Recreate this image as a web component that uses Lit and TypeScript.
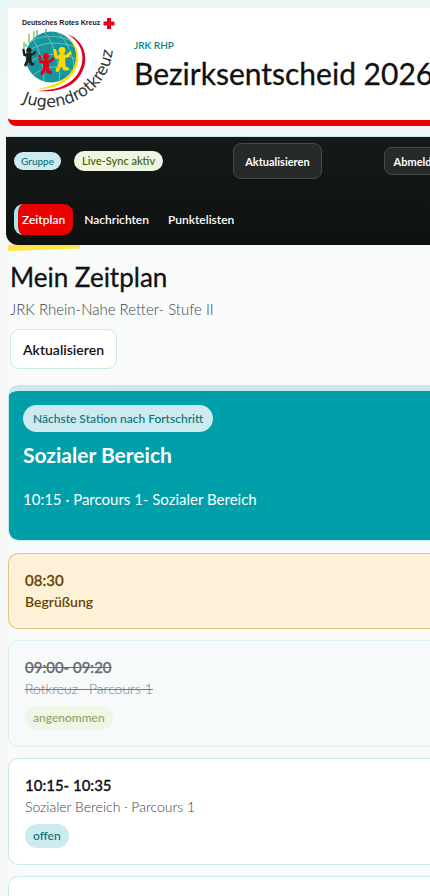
import { LitElement, html, css, svg } from "lit";
import { customElement, property } from "lit/decorators.js";
import { classMap } from "lit/directives/class-map.js";

interface Slot {
  time: string;
  title: string;
  kind: "notice" | "done" | "open";
  badge?: string;
}

const SLOTS: Slot[] = [
  { time: "08:30", title: "Begrüßung", kind: "notice" },
  { time: "09:00- 09:20", title: "Rotkreuz · Parcours 1", kind: "done", badge: "angenommen" },
  { time: "10:15- 10:35", title: "Sozialer Bereich · Parcours 1", kind: "open", badge: "offen" },
];

@customElement("jrk-logo")
class JrkLogo extends LitElement {
  static styles = css`
    :host { display: block; flex: none; width: 96px; height: 96px; }
    svg { display: block; width: 100%; height: 100%; }
    .org { font: 700 7px "Liberation Sans", Arial, sans-serif; fill: #222; }
    .name { font: 400 16px "DejaVu Sans", Arial, sans-serif; fill: #333; }
  `;

  private person(color: string) {
    return svg`<g fill="none" stroke=${color} stroke-linecap="round" stroke-linejoin="round">
      <circle cx="0" cy="-5" r="2.6" fill=${color} stroke="none"/>
      <path d="M-5.5 -5 L-4.5 0 L0 0 L4.5 -1 L6 -3" stroke-width="2.4"/>
      <path d="M0 0 V5" stroke-width="5"/>
      <path d="M-1 5 L-3.5 10 M1 5 L2 9 L4 9" stroke-width="2.8"/>
    </g>`;
  }

  render() {
    return html`<svg viewBox="20 16 96 96" role="img" aria-label="Deutsches Rotes Kreuz Jugendrotkreuz">
      <defs>
        <clipPath id="globe"><circle cx="51" cy="57" r="25.5" /></clipPath>
        <path id="arc" d="M22 102 C46 112 76 107 96 87 C109 74 115 56 113 30" />
      </defs>
      <text class="org" x="22" y="25">Deutsches Rotes Kreuz</text>
      <path d="M107 18h4v3.500h3.500v4h-3.500v3.500h-4v-3.500h-3.500v-4h3.500z" fill="#e3001b" />
      <circle cx="51" cy="57" r="25.500" fill="#14979f" />
      <g clip-path="url(#globe)" fill="none" stroke="#6fbdb4" stroke-width="1">
        <path d="M25 53Q48 36 78 48M24 66Q48 46 79 60M30 78Q50 58 78 74M31 36Q45 56 44 84M44 31Q60 52 60 84M56 31Q76 48 74 76M28 43Q44 31 70 40" />
      </g>
      <path d="M29 43V34M34 38V31M24 50V42" stroke="#9bc84a" stroke-width="1.500" />
      <path d="M37 36V30M46 32V29M26 47V44" stroke="#55b8be" stroke-width="1.500" />
      <path d="M65 35C82 45 83 68 67 80C58 87 48 89 38 89C53 86 67 80 73 69C79 57 77 44 65 35Z" fill="#ffe000" />
      <path d="M67 34C90 42 91 70 72 84C61 91 49 92 37 91C54 90 68 87 77 75C87 60 83 43 67 34Z" fill="#e3001b" />
      <g transform="translate(29 55)">${this.person("#20211f")}</g>
      <g transform="translate(46 62) scale(1.150)">${this.person("#e3001b")}</g>
      <g transform="translate(62 57) scale(1.300)">${this.person("#ffd900")}</g>
      <text class="name"><textPath href="#arc">Jugendrotkreuz</textPath></text>
    </svg>`;
  }
}

@customElement("schedule-card")
class ScheduleCard extends LitElement {
  @property({ attribute: false }) slotData!: Slot;

  static styles = css`
    :host { display: block; }
    .card {
      box-sizing: border-box;
      padding: 15px 16px 16px;
      border: 1px solid #cbe8eb;
      border-right: 0;
      border-radius: 10px 0 0 10px;
      background: #fff;
      color: #111;
    }
    .notice { background: #fff1d8; border-color: #e0c382; color: #684300; }
    .done { background: #f6fafb; border-color: #dcf0f1; color: #686c6c; }
    .time { margin: 0; font-size: 15px; line-height: 22px; font-weight: 500; -webkit-text-stroke: 0.3px; }
    .title { margin: 0; font-size: 14px; line-height: 22px; font-weight: 300; color: #3d4343; }
    .notice .title { font-weight: 600; color: inherit; }
    .notice { padding-bottom: 15px; }
    .done .title { color: #777c7c; }
    .done .time, .done .title { text-decoration: line-through; }
    .badge {
      display: inline-block;
      margin: 6px 0 0;
      padding: 0 8px;
      border-radius: 12px;
      font-size: 12px;
      line-height: 24px;
      font-weight: 500;
      background: #cdeaf0;
      color: #087279;
    }
    .done .badge { background: #f1f5e6; color: #8ea462; }
    .foot { display: flex; }
  `;

  render() {
    const s = this.slotData;
    return html`<article class=${classMap({ card: true, [s.kind]: true })}>
      <p class="time">${s.time}</p>
      <p class="title">${s.title}</p>
      ${s.badge ? html`<div class="foot"><span class="badge">${s.badge}</span></div>` : ""}
    </article>`;
  }
}

@customElement("app-root")
class AppRoot extends LitElement {
  static styles = css`
    :host {
      display: block;
      height: 100vh;
      overflow: hidden;
      box-sizing: border-box;
      padding: 8px 0 0 8px;
      font-family: Lato, "Open Sans", sans-serif;
      color: #111;
      background: linear-gradient(#e9f6f6, #f8f8f8 240px);
    }
    h1, h2, h3, p { margin: 0; }
    button { font: inherit; cursor: pointer; white-space: nowrap; }
    header {
      display: flex;
      align-items: center;
      gap: 18px;
      height: 112px;
      padding-left: 12px;
      background: #fff;
      border-bottom: 6px solid #eb0000;
      border-radius: 0 0 0 8px;
      white-space: nowrap;
    }
    .heading { padding-top: 4px; }
    .eyebrow { font-size: 10px; line-height: 14px; font-weight: 600; color: #087f86; }
    h1 { font-size: 30px; line-height: 42px; font-weight: 400; -webkit-text-stroke: 0.3px; }
    .bar {
      margin: 10px 0 0 -2px;
      padding: 0 0 10px 8px;
      border-top: 1px solid #cfe8ec;
      border-radius: 0 0 0 12px;
      background: linear-gradient(#151918, #0d110f);
      color: #fff;
    }
    .status { display: flex; align-items: center; height: 48px; white-space: nowrap; }
    .pill { border-radius: 14px; background: #cdeaf0; color: #087279; font-weight: 500; }
    .group { padding: 0 7px; font-size: 10px; line-height: 18px; }
    .live { margin-left: 13px; padding: 0 8px; font-size: 11px; line-height: 20px; background: #eff5df; color: #3e5b00; }
    .dark {
      box-sizing: border-box;
      border: 1px solid #464a49;
      background: #262a29;
      color: #fff;
      font-size: 11px;
      font-weight: 700;
    }
    .refresh { height: 36px; margin-left: 70px; padding: 0 11px; border-radius: 8px; }
    .logout { height: 28px; margin-left: 62px; padding: 0 9px; border-radius: 8px; }
    nav { display: flex; gap: 19px; margin-top: 19px; }
    nav a { font-size: 12px; line-height: 31px; font-weight: 600; color: #fff; text-decoration: none; }
    nav a.active { margin-right: -8px; padding: 0 8px 0 4px; border-left: 4px solid #9feaf0; border-radius: 9px; background: #eb0000; }
    .accent { width: 72px; height: 6px; background: #ffe443; clip-path: polygon(0 0, 100% 0, 100% 60%, 0 100%); }
    main { background: #f8fbfa; }
    .intro { padding: 8px 0 16px 2px; }
    h2 { font-size: 26px; line-height: 36px; font-weight: 400; -webkit-text-stroke: 0.3px; }
    .team { font-size: 15px; line-height: 20px; margin-top: 4px; font-weight: 300; color: #3f4646; }
    .light {
      height: 40px;
      margin-top: 10px;
      padding: 0 12px;
      border: 1px solid #cbe8eb;
      border-radius: 9px;
      background: #fff;
      color: #111;
      font-size: 14px;
      font-weight: 600;
    }
    .next {
      box-sizing: border-box;
      height: 156px;
      padding: 14px;
      border: 1px solid #cbe8eb;
      border-top: 6px solid #cde7ea;
      border-right: 0;
      border-radius: 10px 0 0 10px;
      background: #00a0ab;
      background-clip: padding-box;
      color: #fff;
    }
    .hint { display: inline-block; padding: 0 10px; font-size: 12px; line-height: 27px; }
    h3 { margin-top: 9px; font-size: 21px; line-height: 28px; font-weight: 700; }
    .where { margin-top: 20px; font-size: 15px; line-height: 20px; }
    .list { display: grid; gap: 11px; margin-top: 12px; }
    .upcoming { height: 40px; border: 1px solid #cbe8eb; border-right: 0; border-radius: 10px 0 0 10px; background: #fff; }
  `;

  render() {
    return html`
      <header>
        <jrk-logo></jrk-logo>
        <div class="heading">
          <p class="eyebrow">JRK RHP</p>
          <h1>Bezirksentscheid 2026</h1>
        </div>
      </header>
      <div class="bar">
        <div class="status">
          <span class="pill group">Gruppe</span>
          <span class="pill live">Live-Sync aktiv</span>
          <button class="dark refresh">Aktualisieren</button>
          <button class="dark logout">Abmelden</button>
        </div>
        <nav>
          <a class="active" href="#zeitplan">Zeitplan</a>
          <a href="#nachrichten">Nachrichten</a>
          <a href="#punktelisten">Punktelisten</a>
        </nav>
      </div>
      <main>
        <div class="accent"></div>
        <section class="intro">
          <h2>Mein Zeitplan</h2>
          <p class="team">JRK Rhein-Nahe Retter- Stufe II</p>
          <button class="light">Aktualisieren</button>
        </section>
        <section class="next">
          <span class="pill hint">Nächste Station nach Fortschritt</span>
          <h3>Sozialer Bereich</h3>
          <p class="where">10:15 · Parcours 1- Sozialer Bereich</p>
        </section>
        <div class="list">
          ${SLOTS.map((s) => html`<schedule-card .slotData=${s}></schedule-card>`)}
          <div class="upcoming"></div>
        </div>
      </main>
    `;
  }
}
